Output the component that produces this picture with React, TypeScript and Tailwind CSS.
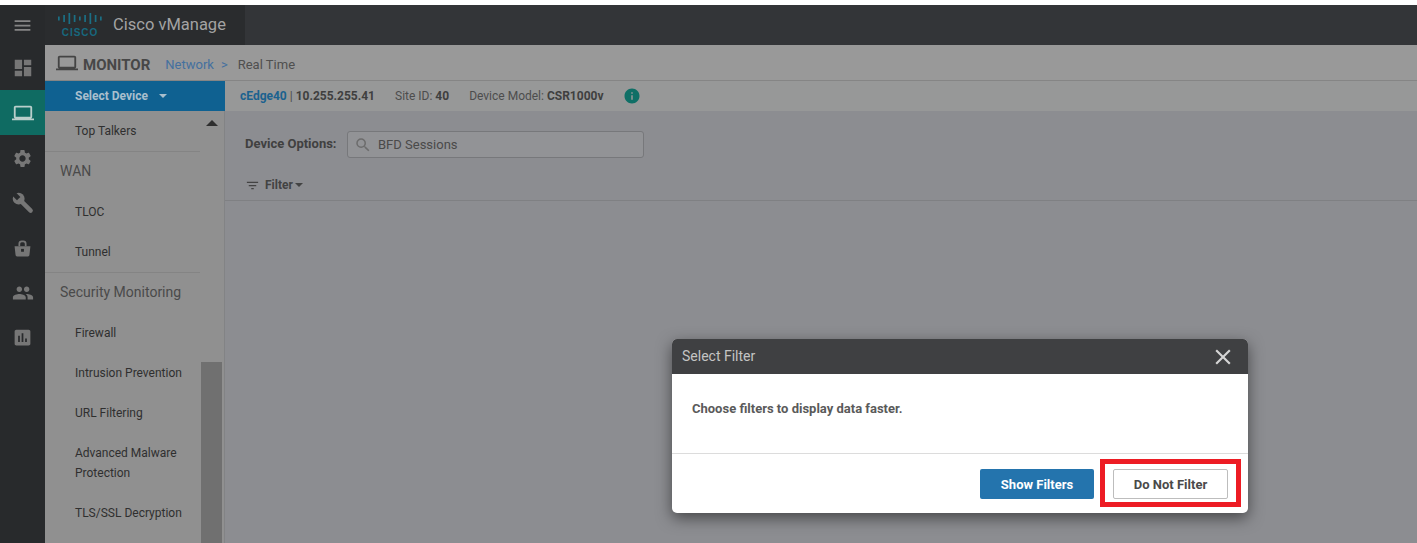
import React from 'react';
import {
  MdMenu,
  MdDashboard,
  MdLaptop,
  MdSettings,
  MdPeople,
  MdAssessment,
  MdClose,
  MdSearch,
  MdFilterList,
  MdInfo,
} from 'react-icons/md';

// Wrench and bag in the rail differ from the Material ones, so they are drawn here
const WrenchIcon = ({ size }: { size: number }) => (
  <svg width={size} height={size} viewBox="0 0 24 24">
    <circle cx="8" cy="8" r="6.2" fill="currentColor" />
    <line x1="9" y1="9" x2="20.5" y2="20.5" stroke="currentColor" strokeWidth="4.6" strokeLinecap="round" />
    <rect x="5.5" y="-0.5" width="5" height="8.5" fill="#282a2c" transform="rotate(-45 8 8)" />
  </svg>
);

const BagIcon = ({ size }: { size: number }) => (
  <svg width={size} height={size} viewBox="0 0 24 24">
    <path d="M8 9V6a3 3 0 0 1 3-3h2a3 3 0 0 1 3 3v3" fill="none" stroke="currentColor" strokeWidth="2.2" />
    <path d="M2 9h20l-1.2 11a2 2 0 0 1-2 2H5.2a2 2 0 0 1-2-2Z" fill="currentColor" />
    <rect x="10.2" y="12.5" width="3.6" height="3.6" fill="#282a2c" />
  </svg>
);

const railIcons = [
  { icon: MdDashboard, size: 22 },
  { icon: MdLaptop, size: 22, active: true },
  { icon: MdSettings, size: 21, shift: true },
  { icon: WrenchIcon, size: 23 },
  { icon: BagIcon, size: 19, shift: true },
  { icon: MdPeople, size: 22 },
  { icon: MdAssessment, size: 21 },
];

const CiscoLogo = () => (
  <div className="flex flex-col items-center w-[46px]">
    <svg width="46" height="11" viewBox="0 0 46 11" className="text-[#1b6f85]">
      {[4, 7, 11, 7, 4, 7, 11, 7, 4].map((h, i) => (
        <rect key={i} x={1 + i * 5.25} y={(11 - h) / 2} width="1.7" height={h} fill="currentColor" />
      ))}
    </svg>
    <span className="mt-[4px] font-['Liberation_Sans',sans-serif] text-[10px] leading-[9px] font-bold tracking-[1px] text-[#17687e]">
      CISCO
    </span>
  </div>
);

const Item = ({ children }: { children: React.ReactNode }) => (
  <div className="py-[10px] pl-[30px] pr-2 text-[12px] leading-[20px] text-[#2f2f2f]">{children}</div>
);

const Section = ({ children }: { children: React.ReactNode }) => (
  <div className="flex h-[41px] items-center border-t border-[#848484] pl-[15px] pb-[2px] text-[14px] text-[#4a4a4a]">
    {children}
  </div>
);

export default function App() {
  return (
    <div className="relative h-[543px] w-[1417px] overflow-hidden bg-white font-['Roboto',sans-serif]">
      <div className="mt-[5px] flex h-[538px]">
        {/* left rail */}
        <div className="flex w-[45px] shrink-0 flex-col bg-[#282a2c] text-[#767676]">
          <div className="flex h-[40px] items-center justify-center text-[#858585]">
            <MdMenu size={21} />
          </div>
          {railIcons.map(({ icon: Icon, size, active, shift }, i) => (
            <div
              key={i}
              className={`flex h-[45px] items-center justify-center ${active ? 'bg-[#0f6b62] text-[#b9cfcb]' : ''} ${shift ? 'pt-[2px]' : ''}`}
            >
              <Icon size={size} />
            </div>
          ))}
        </div>

        <div className="flex min-w-0 flex-1 flex-col">
          {/* top bar */}
          <div className="flex h-[40px] shrink-0 bg-[#333538]">
            <div className="flex w-[200px] items-center gap-[10px] bg-[#2a2c2e] pl-[12px]">
              <CiscoLogo />
              <span className="text-[16.5px] text-[#a3a3a3]">Cisco vManage</span>
            </div>
          </div>

          {/* breadcrumb */}
          <div className="flex h-[36px] shrink-0 items-center border-b border-[#858585] bg-[#999999] pl-[11px] pt-[5px]">
            <MdLaptop size={22} className="mb-[5px] text-[#444444]" />
            <span className="ml-[5px] text-[15px] font-bold text-[#474747]">MONITOR</span>
            <span className="ml-[15px] text-[13px] text-[#44709f]">Network</span>
            <span className="ml-[7px] text-[13px] text-[#44709f]">&gt;</span>
            <span className="ml-[10px] text-[13px] text-[#4f4f4f]">Real Time</span>
          </div>

          <div className="flex min-h-0 flex-1">
            {/* sidebar */}
            <div className="flex w-[180px] shrink-0 flex-col bg-[#909090]">
              <div className="flex h-[30px] shrink-0 items-center bg-[#0f6191] pl-[30px] text-[12px] font-bold text-[#a9bfcd]">
                Select Device
                <span className="ml-[11px] h-0 w-0 border-x-[4px] border-t-[4px] border-x-transparent border-t-[#a9bfcd]" />
              </div>
              <div className="flex min-h-0 flex-1 border-r border-[#828385]">
                <div className="w-[155px] shrink-0">
                  <Item>Top Talkers</Item>
                  <Section>WAN</Section>
                  <Item>TLOC</Item>
                  <Item>Tunnel</Item>
                  <Section>Security Monitoring</Section>
                  <Item>Firewall</Item>
                  <Item>Intrusion Prevention</Item>
                  <Item>URL Filtering</Item>
                  <Item>
                    Advanced Malware
                    <br />
                    Protection
                  </Item>
                  <Item>TLS/SSL Decryption</Item>
                </div>
                <div className="flex w-[24px] shrink-0 flex-col items-center pr-[2px] pl-px">
                  <span className="mt-[9px] h-0 w-0 border-x-[6px] border-b-[6px] border-x-transparent border-b-[#2f2f2f]" />
                  <div className="mt-auto h-[181px] w-full bg-[#707070]" />
                </div>
              </div>
            </div>

            {/* main */}
            <div className="min-w-0 flex-1 bg-[#8c8d91]">
              <div className="flex h-[30px] items-center bg-[#979898] pl-[15px] text-[12px] text-[#4d4d4d]">
                <span className="font-bold text-[#1b628f]">cEdge40</span>
                <span className="ml-[3px]">|</span>
                <span className="ml-[3px] font-bold text-[#3f3f3f]">10.255.255.41</span>
                <span className="ml-[20px]">Site ID:</span>
                <span className="ml-[3px] font-bold text-[#3f3f3f]">40</span>
                <span className="ml-[20px]">Device Model:</span>
                <span className="ml-[3px] font-bold text-[#3f3f3f]">CSR1000v</span>
                <MdInfo size={18} className="ml-[20px] text-[#0f6f66]" />
              </div>

              <div className="flex items-center pl-[20px] pt-[20px]">
                <span className="mb-[2px] w-[102px] text-[13px] font-bold text-[#404040]">Device Options:</span>
                <div className="flex h-[27px] w-[297px] items-center rounded-[3px] border border-[#77787b] bg-[#929396] pl-[6px] text-[13px] text-[#4a4a4a]">
                  <MdSearch size={18} className="text-[#6c6c6c]" />
                  <span className="ml-[6px]">BFD Sessions</span>
                </div>
              </div>

              <div className="mt-[15px] flex h-[28px] items-center border-b border-[#7f8083] pl-[20px] pb-[3px] text-[12px] font-bold text-[#434343]">
                <MdFilterList size={15} className="text-[#434343]" />
                <span className="ml-[5px]">Filter</span>
                <span className="ml-[2px] h-0 w-0 border-x-[4px] border-t-[4px] border-x-transparent border-t-[#434343]" />
              </div>
            </div>
          </div>
        </div>
      </div>

      {/* modal */}
      <div className="absolute left-[672px] top-[339px] w-[576px] overflow-hidden rounded-[5px] bg-white shadow-[0_5px_15px_rgba(0,0,0,0.5)]">
        <div className="flex h-[35px] items-center justify-between bg-[#3f4042] pl-[10px] pr-[12px]">
          <span className="text-[14px] text-[#c4c4c4]">Select Filter</span>
          <MdClose size={26} className="text-[#d5d5d5]" />
        </div>
        <div className="h-[80px] border-b border-[#dcdcdc] pl-[20px] pt-[27px] text-[13px] leading-[16px] font-bold text-[#5a5a5a]">
          Choose filters to display data faster.
        </div>
        <div className="flex h-[59px] items-start justify-end pt-[15px] pr-[20px] text-[13px] font-bold">
          <button className="mr-[19px] h-[30px] w-[114px] rounded-[2px] bg-[#2474ad] pt-[2px] text-white">
            Show Filters
          </button>
          <button className="h-[30px] w-[115px] rounded-[2px] border border-[#bdbdbd] bg-white pt-[2px] text-[#4a4a4a]">
            Do Not Filter
          </button>
        </div>
      </div>

      {/* red highlight drawn over the button */}
      <div className="absolute left-[1100px] top-[459px] h-[48px] w-[141px] border-[5px] border-[#ed1c24]" />
    </div>
  );
}
